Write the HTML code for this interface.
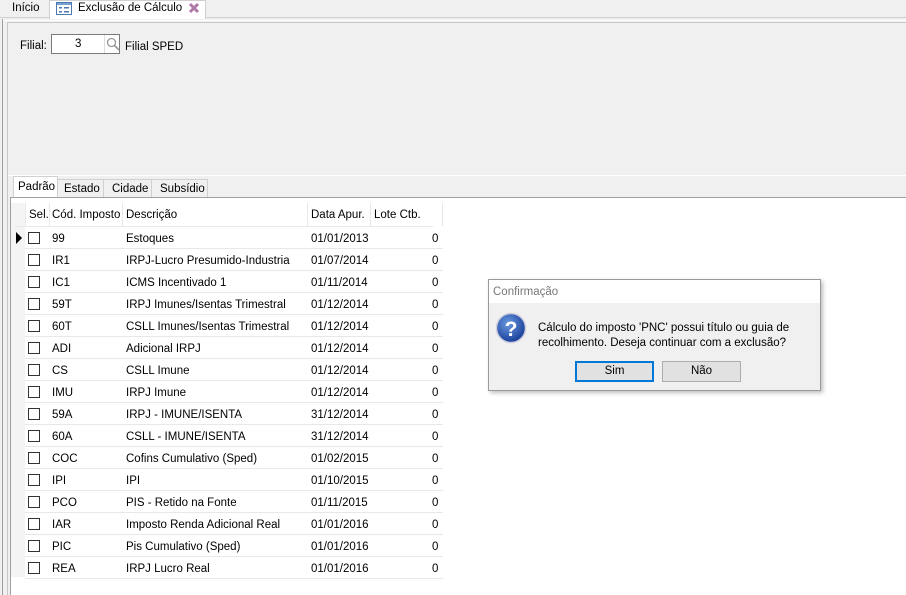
<!DOCTYPE html>
<html><head><meta charset="utf-8"><style>
*{margin:0;padding:0;box-sizing:border-box}
body{width:906px;height:595px;overflow:hidden;background:#f0f0f0;font-family:"Liberation Sans",sans-serif;font-size:11.5px;color:#000;position:relative}
.abs{position:absolute}
.tabbar{left:0;top:0;width:906px;height:18px;background:#f0f0f0;border-bottom:1px solid #d0d0d0}
.grid{left:10px;top:197px;width:896px;height:398px;background:#fff;border-left:1px solid #a0a0a0;border-top:1px solid #a0a0a0}
.row{position:absolute;left:15px;width:418px;height:22px;border-bottom:1px solid #e8e8e8}
.row span{position:absolute;top:6px;white-space:nowrap}
.cb{position:absolute;left:3px;top:5px;width:12px;height:12px;border:1px solid #333;background:#fff}
.hd span{position:absolute;top:6px}
.btn{position:absolute;height:21px;background:#e1e1e1;border:1px solid #adadad;text-align:center;line-height:19px}
</style></head><body>
<div class="abs tabbar"></div>
<div class="abs" style="left:12px;top:2px">Início</div>
<div class="abs" style="left:49px;top:0;width:157px;height:19px;background:#fff;border:1px solid #d0d0d0;border-bottom:none"></div>
<svg class="abs" style="left:56px;top:2px" width="16" height="13"><rect x="0.5" y="0.5" width="15" height="12" fill="#fff" stroke="#4a78b0"/><rect x="1" y="1" width="14" height="2" fill="#7aa0d0"/><rect x="3" y="5" width="3" height="1.5" fill="#4a78b0"/><rect x="8" y="5" width="5" height="1.5" fill="#4a78b0"/><rect x="3" y="9" width="3" height="1.5" fill="#4a78b0"/><rect x="8" y="9" width="5" height="1.5" fill="#4a78b0"/></svg>
<div class="abs" style="left:78px;top:2px">Exclusão de Cálculo</div>
<svg class="abs" style="left:188px;top:2px" width="12" height="12"><path d="M2 2L10 10M10 2L2 10" stroke="#b07aa8" stroke-width="3"/></svg>
<div class="abs" style="left:2px;top:19px;width:1px;height:576px;background:#a0a0a0"></div>
<div class="abs" style="left:3px;top:20px;width:903px;height:1px;background:#fff"></div>
<div class="abs" style="left:7px;top:22px;width:899px;height:1px;background:#c8c8c8"></div>
<div class="abs" style="left:7px;top:22px;width:1px;height:573px;background:#c8c8c8"></div>
<div class="abs" style="left:20px;top:40px">Filial:</div>
<div class="abs" style="left:51px;top:34px;width:69px;height:20px;background:#fff;border:1px solid #7a7a7a"></div>
<div class="abs" style="left:75px;top:38px">3</div>
<div class="abs" style="left:104px;top:35px;width:1px;height:18px;background:#ddd"></div>
<svg class="abs" style="left:106px;top:37px" width="14" height="14"><circle cx="5.5" cy="5.5" r="4" fill="none" stroke="#999" stroke-width="1.3"/><path d="M8.5 8.5L13 13" stroke="#999" stroke-width="1.8"/></svg>
<div class="abs" style="left:125px;top:41px">Filial SPED</div>
<div class="abs" style="left:8px;top:175px;width:898px;height:1px;background:#fff"></div>
<div class="abs" style="left:13px;top:176px;width:45px;height:21px;background:#fff;border:1px solid #d0d0d0;border-bottom:none"></div>
<div class="abs" style="left:58px;top:179px;width:46px;height:18px;border:1px solid #d0d0d0;border-left:none;border-bottom:none"></div>
<div class="abs" style="left:104px;top:179px;width:48px;height:18px;border-right:1px solid #d0d0d0;border-top:1px solid #d0d0d0"></div>
<div class="abs" style="left:152px;top:179px;width:56px;height:18px;border-right:1px solid #d0d0d0;border-top:1px solid #d0d0d0"></div>
<div class="abs" style="left:18px;top:181px">Padrão</div>
<div class="abs" style="left:64px;top:183px">Estado</div>
<div class="abs" style="left:112px;top:183px">Cidade</div>
<div class="abs" style="left:160px;top:183px">Subsídio</div>
<div class="abs grid"></div>
<div class="abs" style="left:11px;top:203px;width:14px;height:374px;background:#f4f4f4"></div>
<div class="row hd" style="top:203px;height:24px">
<span style="left:14px">Sel.</span><span style="left:37px">Cód. Imposto</span><span style="left:111px">Descrição</span><span style="left:296px">Data Apur.</span><span style="left:359px">Lote Ctb.</span>
<div style="position:absolute;left:10px;top:0;width:1px;height:23px;background:#e8e8e8"></div>
<div style="position:absolute;left:34px;top:0;width:1px;height:23px;background:#e8e8e8"></div>
<div style="position:absolute;left:107px;top:0;width:1px;height:23px;background:#e8e8e8"></div>
<div style="position:absolute;left:292px;top:0;width:1px;height:23px;background:#e8e8e8"></div>
<div style="position:absolute;left:355px;top:0;width:1px;height:23px;background:#e8e8e8"></div>
<div style="position:absolute;left:427px;top:0;width:1px;height:23px;background:#e8e8e8"></div>
</div>
<svg class="abs" style="left:15px;top:232px" width="8" height="12"><path d="M1 0L7 6L1 12Z" fill="#000"/></svg>
<div id="rows"></div>
<script>
var d=[["99","Estoques","01/01/2013"],["IR1","IRPJ-Lucro Presumido-Industria","01/07/2014"],["IC1","ICMS Incentivado 1","01/11/2014"],["59T","IRPJ Imunes/Isentas Trimestral","01/12/2014"],["60T","CSLL Imunes/Isentas Trimestral","01/12/2014"],["ADI","Adicional IRPJ","01/12/2014"],["CS","CSLL Imune","01/12/2014"],["IMU","IRPJ Imune","01/12/2014"],["59A","IRPJ - IMUNE/ISENTA","31/12/2014"],["60A","CSLL - IMUNE/ISENTA","31/12/2014"],["COC","Cofins Cumulativo (Sped)","01/02/2015"],["IPI","IPI","01/10/2015"],["PCO","PIS - Retido na Fonte","01/11/2015"],["IAR","Imposto Renda Adicional Real","01/01/2016"],["PIC","Pis Cumulativo (Sped)","01/01/2016"],["REA","IRPJ Lucro Real","01/01/2016"]];
var h="";d.forEach(function(r,i){h+='<div class="row" style="left:25px;width:418px;top:'+(227+i*22)+'px"><div class="cb"></div><span style="left:27px">'+r[0]+'</span><span style="left:101px">'+r[1]+'</span><span style="left:286px">'+r[2]+'</span><span style="left:407px">0</span></div>';});
document.getElementById("rows").innerHTML=h;
</script>
<div class="abs" style="left:488px;top:279px;width:333px;height:112px;background:#f0f0f0;border:1px solid #9a9a9a;box-shadow:2px 2px 4px rgba(0,0,0,.25)"></div>
<div class="abs" style="left:489px;top:280px;width:331px;height:23px;background:#fff"></div>
<div class="abs" style="left:493px;top:286px;color:#777">Confirmação</div>
<svg class="abs" style="left:495px;top:312px" width="32" height="32"><defs><radialGradient id="g" cx="40%" cy="35%" r="65%"><stop offset="0" stop-color="#6a9ae0"/><stop offset="1" stop-color="#1a3f9a"/></radialGradient></defs><circle cx="16" cy="16" r="14.5" fill="url(#g)" stroke="#ccd" stroke-width="1.5"/><text x="16" y="24" text-anchor="middle" fill="#fff" font-family="Liberation Sans" font-weight="bold" font-size="21">?</text></svg>
<div class="abs" style="left:538px;top:321px;line-height:15px">Cálculo do imposto 'PNC' possui título ou guia de<br>recolhimento. Deseja continuar com a exclusão?</div>
<div class="btn" style="left:575px;top:361px;width:79px;border:2px solid #0078d7;line-height:17px">Sim</div>
<div class="btn" style="left:662px;top:361px;width:79px">Não</div>
</body></html>
